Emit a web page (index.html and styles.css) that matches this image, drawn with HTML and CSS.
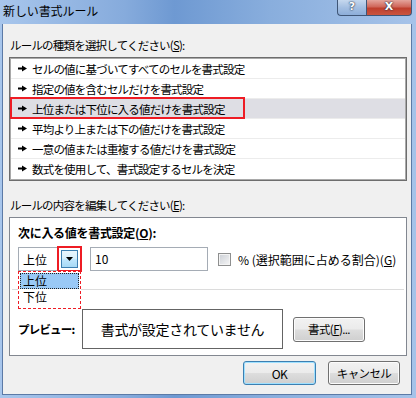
FILE: index.html
```html
<!DOCTYPE html>
<html lang="ja">
<head>
  <meta charset="UTF-8">
  <title>新しい書式ルール</title>
  <link rel="stylesheet" href="styles.css">
</head>
<body>
  <div class="window">
    <!-- Title bar -->
    <div class="titlebar">
      <span class="title">新しい書式ルール</span>
      <div class="caption-buttons">
        <span class="cap-help">?</span>
        <span class="cap-close">X</span>
      </div>
    </div>

    <div class="client">
      <div class="label">ルールの種類を選択してください(<u>S</u>):</div>
      <ul class="rule-list">
        <li><svg class="bullet" viewBox="0 0 9 7"><path d="M0 2.5h4V0.5l5 3-5 3V4.5H0z"/></svg>セルの値に基づいてすべてのセルを書式設定</li>
        <li><svg class="bullet" viewBox="0 0 9 7"><path d="M0 2.5h4V0.5l5 3-5 3V4.5H0z"/></svg>指定の値を含むセルだけを書式設定</li>
        <li class="selected"><span class="mark-row"></span><svg class="bullet" viewBox="0 0 9 7"><path d="M0 2.5h4V0.5l5 3-5 3V4.5H0z"/></svg>上位または下位に入る値だけを書式設定</li>
        <li><svg class="bullet" viewBox="0 0 9 7"><path d="M0 2.5h4V0.5l5 3-5 3V4.5H0z"/></svg>平均より上または下の値だけを書式設定</li>
        <li><svg class="bullet" viewBox="0 0 9 7"><path d="M0 2.5h4V0.5l5 3-5 3V4.5H0z"/></svg>一意の値または重複する値だけを書式設定</li>
        <li><svg class="bullet" viewBox="0 0 9 7"><path d="M0 2.5h4V0.5l5 3-5 3V4.5H0z"/></svg>数式を使用して、書式設定するセルを決定</li>
      </ul>

      <div class="label label-2">ルールの内容を編集してください(<u>E</u>):</div>
      <div class="edit-box">
        <div class="heading">次に入る値を書式設定(<u>O</u>):</div>

        <div class="control-row">
          <div class="combo">
            <span class="combo-text">上位</span>
            <span class="drop-mark"><span class="drop-btn"><svg viewBox="0 0 7 4"><path d="M0 0h7L3.5 4z"/></svg></span></span>
            <ul class="drop-list">
              <li class="hot">上位</li>
              <li>下位</li>
            </ul>
          </div>
          <div class="text-input">10</div>
          <span class="checkbox"></span>
          <span class="check-label">% (選択範囲に占める割合)(<u>G</u>)</span>
        </div>

        <div class="separator"></div>

        <div class="preview-row">
          <span class="preview-label">プレビュー:</span>
          <div class="preview-box">書式が設定されていません</div>
          <button class="btn btn-format">書式(<u>F</u>)...</button>
        </div>
      </div>

      <div class="button-row">
        <button class="btn btn-default">OK</button>
        <button class="btn">キャンセル</button>
      </div>
    </div>
  </div>
</body>
</html>
```

FILE: styles.css
```css
:root {
  --face: #f0f0f0;
  --frame: #7ea5d9;
  --border-gray: #828790;
  --mark-red: #ee1c24;
  --text: #000000;
}

body {
  margin: 0;
  font-family: "Noto Sans CJK JP", "Noto Sans", sans-serif;
  font-size: 11.5px;
  color: var(--text);
}

u {
  text-underline-offset: 1px;
}

.window {
  width: 416px;
  height: 398px;
  display: flex;
  flex-direction: column;
  background: linear-gradient(to right, #a8c6ec, #86abdc 30%, #6e99d2 42%, #89aedd 65%, #a6c3e9);
  overflow: hidden;
}

/* Title bar */
.titlebar {
  height: 24px;
  flex: none;
  display: flex;
  justify-content: space-between;
  align-items: flex-start;
}

.title {
  padding-left: 3px;
  line-height: 22px;
  font-size: 12px;
  letter-spacing: -0.1px;
}

.caption-buttons {
  display: flex;
  margin-right: 4px;
}

.cap-help,
.cap-close {
  height: 16px;
  box-sizing: border-box;
  border: 1px solid #3f5677;
  border-top: none;
  color: #fff;
  font-family: "DejaVu Sans", sans-serif;
  font-weight: bold;
  font-size: 11px;
  line-height: 14px;
  text-align: center;
  text-shadow: 0 0 2px #1d2c44, 0 0 1px #1d2c44;
}

.cap-help {
  width: 29px;
  border-radius: 0 0 0 4px;
  border-right: none;
  background: linear-gradient(#c6d8ee, #a4bfe2 50%, #8daed9);
}

.cap-close {
  width: 46px;
  border-radius: 0 0 4px 0;
  background: linear-gradient(#e4a59c, #d0675a 45%, #bf3f2d 55%, #c9553f);
}

/* Dialog client area */
.client {
  flex: 1;
  margin: 0 4px 3px 2px;
  border: 1px solid #5c7aa6;
  border-top: none;
  background: var(--face);
  padding: 13px 4px 0 6px;
  display: flex;
  flex-direction: column;
}

.label {
  line-height: 16px;
  padding-left: 1px;
  margin-bottom: 4px;
  letter-spacing: -0.8px;
}

.label-2 {
  margin-top: 16px;
}

.rule-list {
  list-style: none;
  margin: 0;
  padding: 0;
  background: #fff;
  border: 1px solid #6d6d6d;
  box-shadow: inset 0 0 0 1px #a9a9a9;
  padding: 1px;
}

.rule-list li {
  position: relative;
  height: 19px;
  border-bottom: 1px solid #ececec;
  display: flex;
  align-items: center;
  padding-left: 7px;
  letter-spacing: -0.8px;
  white-space: nowrap;
}

.rule-list li:last-child {
  border-bottom-color: #fff;
}

.rule-list li.selected {
  background: #dedee4;
}

.bullet {
  width: 9px;
  height: 7px;
  margin-right: 5px;
  fill: #000;
  flex: none;
}

.mark-row {
  position: absolute;
  left: -1px;
  top: -2px;
  width: 235px;
  height: 22px;
  box-sizing: border-box;
  border: 2px solid var(--mark-red);
}

/* Edit area */
.edit-box {
  height: 139px;
  box-sizing: border-box;
  border: 1px solid var(--border-gray);
  background: #fff;
  padding: 7px 0 6px 8px;
}

.heading {
  font-weight: bold;
  font-size: 12px;
  line-height: 16px;
  letter-spacing: -0.3px;
}

.control-row {
  display: flex;
  align-items: center;
  height: 24px;
  margin-top: 6px;
}

.combo {
  position: relative;
  width: 64px;
  height: 24px;
  box-sizing: border-box;
  border: 1px solid #a5acb5;
  background: #fff;
  display: flex;
  align-items: center;
}

.combo-text {
  padding-left: 4px;
  font-size: 12px;
}

.drop-mark {
  position: absolute;
  right: -1px;
  top: -2px;
  width: 25px;
  height: 26px;
  box-sizing: border-box;
  border: 2px solid var(--mark-red);
  display: flex;
  align-items: center;
  justify-content: center;
}

.drop-btn {
  width: 17px;
  height: 18px;
  box-sizing: border-box;
  border: 1px solid #3c7fb1;
  background: linear-gradient(#eaf6fd, #d9f0fc 45%, #bee6fd 55%, #a7d9f5);
  display: flex;
  align-items: center;
  justify-content: center;
}

.drop-btn svg {
  width: 7px;
  height: 4px;
  fill: #000;
}

.drop-list {
  position: absolute;
  left: -1px;
  top: 23px;
  width: 63px;
  height: 38px;
  box-sizing: border-box;
  margin: 0;
  padding: 1px;
  list-style: none;
  background: #fff;
  border: 1px dashed var(--mark-red);
  z-index: 2;
}

.drop-list li {
  height: 16px;
  line-height: 16px;
  padding-left: 3px;
  font-size: 12px;
  box-sizing: border-box;
}

.drop-list li.hot {
  background: #99c9f6;
  outline: 1px dotted #222;
  outline-offset: -1px;
}

.text-input {
  width: 118px;
  height: 24px;
  box-sizing: border-box;
  margin-left: 8px;
  border: 1px solid #a5acb5;
  padding-left: 4px;
  line-height: 22px;
  font-size: 12px;
}

.checkbox {
  width: 13px;
  height: 13px;
  box-sizing: border-box;
  margin-left: 10px;
  border: 1px solid #8e8f8f;
  box-shadow: inset 0 0 0 1px #f4f4f4;
  background: linear-gradient(135deg, #cbcfd5, #f6f6f6);
}

.check-label {
  margin-left: 7px;
  font-size: 12px;
  letter-spacing: 0;
  white-space: nowrap;
}

.separator {
  height: 1px;
  margin: 18px 2px 0 -6px;
  background: #dcdcdc;
}

.preview-row {
  display: flex;
  align-items: center;
  height: 40px;
  margin-top: 19px;
}

.preview-label {
  width: 64px;
  font-weight: bold;
  letter-spacing: -0.8px;
}

.preview-box {
  width: 201px;
  height: 40px;
  box-sizing: border-box;
  border: 1px solid #646464;
  display: flex;
  align-items: center;
  justify-content: center;
  font-size: 14px;
  letter-spacing: -0.3px;
}

/* Buttons */
.btn {
  width: 72px;
  height: 24px;
  box-sizing: border-box;
  border: 1px solid #707070;
  border-radius: 3px;
  background: linear-gradient(#f2f2f2, #ebebeb 48%, #dddddd 52%, #cfcfcf);
  box-shadow: inset 0 0 0 1px #fcfcfc;
  font-family: inherit;
  font-size: 11.5px;
  color: #000;
  padding: 0;
  letter-spacing: -0.6px;
}

.btn-format {
  height: 25px;
  margin-left: 10px;
}

.button-row {
  display: flex;
  justify-content: flex-end;
  gap: 12px;
  margin-top: 5px;
  padding-right: 7px;
}

.btn-default {
  width: 73px;
  border-color: #3c7fb1;
  box-shadow: inset 0 0 0 1px #9ee0ff;
  font-size: 12px;
}
```
